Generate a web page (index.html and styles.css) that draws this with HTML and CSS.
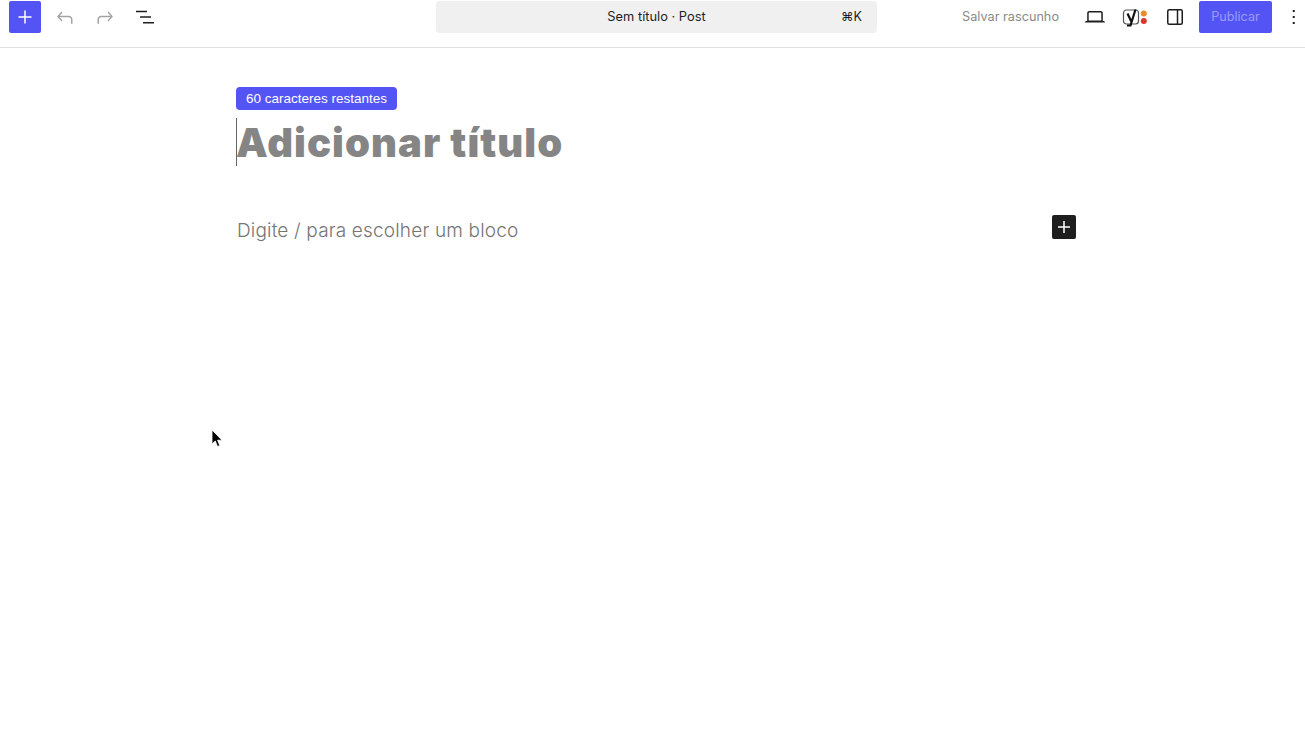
FILE: index.html
```html
<!DOCTYPE html>
<html lang="pt-BR">
<head>
    <meta charset="UTF-8">
    <meta name="viewport" content="width=device-width, initial-scale=1.0">
    <title>Sem título · Post</title>
    <link rel="stylesheet" href="styles.css">
</head>
<body>
    <div class="topbar">
        <div class="topbar-left">
            <button class="add-btn">
                <svg width="24" height="24" viewBox="0 0 24 24"><path d="M11.250 5.500h1.500v5.750h5.750v1.500h-5.750v5.750h-1.500v-5.750H5.500v-1.500h5.750z" fill="#fff"/></svg>
            </button>
            <button class="icon-btn">
                <svg width="24" height="24" viewBox="0 0 24 24"><path d="M18.300 11.700c-.6-.6-1.400-.9-2.300-.9H6.700l2.900-3.300-1.100-1-4.500 5L8.500 16.500l1-1.100-2.900-3.100H16c.5 0 .9.200 1.200.5.4.3.8 1 .8 1.700v4.200h1.500v-4.200c0-1-.5-2-1.200-2.800z" fill="#a3a3a3"/></svg>
            </button>
            <button class="icon-btn">
                <svg width="24" height="24" viewBox="0 0 24 24"><path d="M15.600 6.500l-1.100 1 2.900 3.300H8c-.9 0-1.700.3-2.300.9-.7.800-1.200 1.800-1.200 2.800v4.200H6v-4.200c0-.7.400-1.400.8-1.700.3-.3.700-.5 1.200-.5h9.400l-2.900 3.100 1 1.100 4.400-5z" fill="#a3a3a3"/></svg>
            </button>
            <button class="icon-btn">
                <svg width="24" height="24" viewBox="0 0 24 24"><path d="M3 6.400h11M7 12h11M10 17.700h11" stroke="#1e1e1e" stroke-width="1.500"/></svg>
            </button>
        </div>
        <div class="command-bar">
            <span class="command-title">Sem título · Post</span>
            <span class="command-key">⌘K</span>
        </div>
        <div class="topbar-right">
            <span class="save-draft">Salvar rascunho</span>
            <button class="icon-btn view-btn">
                <svg width="24" height="24" viewBox="0 0 24 24"><path d="M20.500 16h-.7V8c0-1.100-.9-2-2-2H6.200c-1.100 0-2 .9-2 2v8h-.7c-.8 0-1.500.7-1.500 1.500h20c0-.8-.7-1.500-1.500-1.500zM5.700 8c0-.3.2-.5.5-.5h11.600c.3 0 .5.200.5.500v7.600H5.700V8z" fill="#1e1e1e"/></svg>
            </button>
            <button class="icon-btn yoast-btn">
                <svg width="28" height="24" viewBox="0 0 28 24">
                    <rect x="2.500" y="5" width="15" height="14" rx="3" fill="none" stroke="#555" stroke-width="1.200"/>
                    <path d="M6.500 8.500l3.800 8M14.500 4.500L9.500 20.500H6" fill="none" stroke="#111" stroke-width="2.200"/>
                    <circle cx="22.800" cy="8.500" r="3" fill="#ee8a24"/>
                    <circle cx="22.800" cy="16" r="3" fill="#e0332d"/>
                </svg>
            </button>
            <button class="icon-btn panel-btn">
                <svg width="24" height="24" viewBox="0 0 24 24"><rect x="4.750" y="4.750" width="14.500" height="14.500" rx="1.500" fill="none" stroke="#1e1e1e" stroke-width="1.500"/><path d="M14.500 5v14" stroke="#1e1e1e" stroke-width="1.500"/></svg>
            </button>
            <button class="publish-btn">Publicar</button>
            <button class="icon-btn more-btn">
                <svg width="24" height="24" viewBox="0 0 24 24"><path d="M10.750 5h2v2h-2zM10.750 11h2v2h-2zM10.750 17h2v2h-2z" fill="#1e1e1e"/></svg>
            </button>
        </div>
    </div>

    <div class="editor">
        <div class="char-badge">60 caracteres restantes</div>
        <h1 class="post-title">Adicionar título</h1>
        <div class="block-row">
            <p class="block-placeholder">Digite / para escolher um bloco</p>
            <button class="block-add">
                <svg width="24" height="24" viewBox="0 0 24 24"><path d="M11.250 6h1.500v5.250H18v1.500h-5.250V18h-1.500v-5.250H6v-1.500h5.250z" fill="#fff"/></svg>
            </button>
        </div>
    </div>

    <svg class="mouse-cursor" width="14" height="20" viewBox="0 0 14 20"><path d="M1 1v14l3.300-3 2.200 5.500 2.300-1-2.300-5.300h4.500z" fill="#000" stroke="#fff" stroke-width=".8"/></svg>
</body>
</html>
```

FILE: styles.css
```css
* {
    margin: 0;
    padding: 0;
    box-sizing: border-box;
}

body {
    font-family: Inter, 'Liberation Sans', sans-serif;
    background: #fff;
    min-height: 100vh;
    overflow: hidden;
}

button {
    border: none;
    background: none;
    display: flex;
    align-items: center;
    justify-content: center;
    font-family: inherit;
}

.topbar {
    display: flex;
    align-items: center;
    height: 48px;
    padding-top: 1px;
    padding-bottom: 15px;
    border-bottom: 1px solid #e0e0e0;
}

.topbar-left {
    display: flex;
    align-items: center;
    width: 436px;
    padding-left: 9px;
}

.add-btn {
    width: 32px;
    height: 32px;
    background: #5454f5;
    border-radius: 2px;
    margin-right: 12px;
}

.icon-btn {
    width: 24px;
    height: 24px;
    margin-right: 16px;
}

.command-bar {
    position: relative;
    width: 441px;
    height: 32px;
    background: #f0f0f0;
    border-radius: 4px;
    display: flex;
    align-items: center;
    justify-content: center;
    color: #1e1e1e;
}

.command-title {
    font-size: 12.850px;
}

.command-key {
    position: absolute;
    right: 15px;
    font-size: 12.500px;
}

.topbar-right {
    flex: 1;
    display: flex;
    align-items: center;
    justify-content: flex-end;
}

.save-draft {
    font-size: 12.700px;
    color: #8a8a8a;
    margin-right: 24px;
}

.view-btn {
    margin-right: 14px;
}

.yoast-btn {
    width: 28px;
    margin-right: 14px;
}

.panel-btn {
    margin-right: 12px;
}

.publish-btn {
    width: 73px;
    height: 32px;
    background: #5454f5;
    color: #9c9cf8;
    font-size: 12.600px;
    border-radius: 2px;
    margin-right: 10px;
}

.more-btn {
    margin-right: -1px;
}

.editor {
    width: 840px;
    margin-left: 236px;
    padding-top: 39px;
}

.char-badge {
    display: inline-block;
    height: 23px;
    line-height: 24px;
    padding: 0 10px;
    background: #5454f5;
    color: #fff;
    font-family: 'Liberation Sans', sans-serif;
    font-size: 13.500px;
    border-radius: 4px;
    vertical-align: top;
}

.post-title {
    position: relative;
    height: 48px;
    margin-top: 8px;
    font-size: 40px;
    line-height: 50px;
    font-weight: 900;
    letter-spacing: 1.050px;
    color: #858585;
}

.post-title::before {
    content: "";
    position: absolute;
    left: 0;
    top: 0;
    width: 1px;
    height: 48px;
    background: #666;
}

.block-row {
    display: flex;
    align-items: flex-start;
    justify-content: space-between;
    margin-top: 49px;
}

.block-placeholder {
    margin-top: 4px;
    padding-left: 1px;
    font-size: 19px;
    line-height: 24px;
    font-weight: 300;
    letter-spacing: 0.170px;
    color: #757575;
}

.block-add {
    width: 24px;
    height: 24px;
    background: #1e1e1e;
    border-radius: 2px;
}

.mouse-cursor {
    position: absolute;
    left: 211px;
    top: 429px;
}
```
